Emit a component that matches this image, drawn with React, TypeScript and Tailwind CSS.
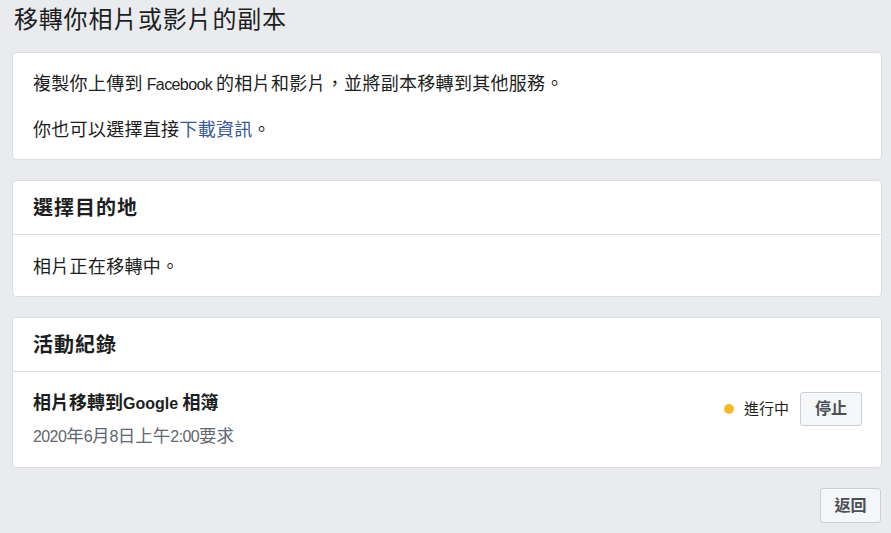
import React from 'react';

const CJK = /([\u3000-\u30ff\u4e00-\u9fff\uff00-\uffef]+)/;

// renders CJK runs and latin runs at different sizes, like the original font pairing
function Mixed({ text, cjk, latin }: { text: string; cjk: string; latin: string }) {
  const parts = text.split(CJK).filter(Boolean);
  return (
    <>
      {parts.map((p, i) => (
        <span key={i} className={CJK.test(p) ? cjk : latin}>
          {p}
        </span>
      ))}
    </>
  );
}

function Card({ children }: { children: React.ReactNode }) {
  return <div className="bg-white border border-[#dadde1] rounded-[4px]">{children}</div>;
}

function CardHeader({ title }: { title: string }) {
  return (
    <div className="h-[54px] flex items-center px-5 border-b border-[#dadde1]">
      <h2 className="text-[20px] font-bold tracking-[1px] text-[#1c1e21] leading-[24px]">{title}</h2>
    </div>
  );
}

export default function App() {
  return (
    <div className="w-[891px] h-[533px] bg-[#e9ebee] pl-3 pr-[9px] font-['Liberation_Sans','Noto_Sans_CJK_TC',sans-serif] overflow-hidden">
      <h1 className="h-10 leading-[40px] pl-[2px] text-[24px] tracking-[0.8px] font-normal text-[#1c1e21] mb-3">
        移轉你相片或影片的副本
      </h1>

      <Card>
        <div className="px-5 pt-[19px] pb-[17px] leading-[24px] text-[#1c1e21]">
          <p>
            <Mixed
              text="複製你上傳到 Facebook 的相片和影片，並將副本移轉到其他服務。"
              cjk="text-[18px] tracking-[0.3px]"
              latin="text-[16px] tracking-[-0.6px]"
            />
          </p>
          <p className="mt-[21px] text-[18px] tracking-[0.3px]">
            你也可以選擇直接<a className="text-[#385898]">下載資訊</a>。
          </p>
        </div>
      </Card>

      <div className="mt-5">
        <Card>
          <CardHeader title="選擇目的地" />
          <div className="px-5 pt-5 pb-[17px] leading-[24px] text-[18px] tracking-[0.3px] text-[#1c1e21]">
            相片正在移轉中。
          </div>
        </Card>
      </div>

      <div className="mt-5">
        <Card>
          <CardHeader title="活動紀錄" />
          <div className="flex items-start justify-between pl-5 pr-[19px] pt-[19px] pb-[18px]">
            <div className="leading-[24px]">
              <div className="font-bold text-[#1c1e21]">
                <Mixed text="相片移轉到Google 相簿" cjk="text-[18px]" latin="text-[16px]" />
              </div>
              <div className="mt-2 text-[#606770]">
                <Mixed text="2020年6月8日上午2:00要求" cjk="text-[17.5px]" latin="text-[16px] tracking-[-0.6px]" />
              </div>
            </div>
            <div className="flex items-center mt-[1px]">
              <span className="w-[10px] h-[10px] rounded-full bg-[#f7b928]" />
              <span className="ml-[10px] text-[15px] text-[#1c1e21]">進行中</span>
              <button className="ml-[11px] w-[62px] h-[34px] bg-[#f5f6f7] border border-[#ccd0d5] rounded-[3px] text-[16px] font-bold text-[#4b4f56]">
                停止
              </button>
            </div>
          </div>
        </Card>
      </div>

      <div className="flex justify-end mt-5 pr-[1px]">
        <button className="w-[61px] h-[35px] bg-[#f5f6f7] border border-[#ccd0d5] rounded-[3px] text-[16px] font-bold text-[#4b4f56]">
          返回
        </button>
      </div>
    </div>
  );
}
